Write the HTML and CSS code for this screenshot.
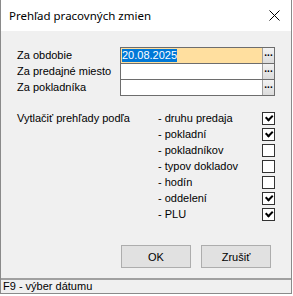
FILE: index.html
```html
<!DOCTYPE html>
<html lang="sk">
<head>
    <meta charset="UTF-8">
    <title>Prehľad pracovných zmien</title>
    <link rel="stylesheet" href="styles.css">
</head>
<body>

<div class="window">
    <div class="titlebar">
        <span class="title">Prehľad pracovných zmien</span>
        <svg class="close" width="11" height="11" viewBox="0 0 11 11">
            <path d="M0.5 0.5 L10.5 10.5 M10.5 0.5 L0.5 10.5" stroke="#000" stroke-width="1"/>
        </svg>
    </div>

    <div class="content">
        <div class="fields">
            <div class="label">Za obdobie</div>
            <div class="input active"><span class="value"><span class="selected">20.08.2025</span></span><span class="dots">...</span></div>
            <div class="label">Za predajné miesto</div>
            <div class="input"><span class="value"></span><span class="dots">...</span></div>
            <div class="label">Za pokladníka</div>
            <div class="input"><span class="value"></span><span class="dots">...</span></div>
        </div>

        <div class="print">
            <div class="print-title">Vytlačiť prehľady podľa</div>
            <div class="options">
                <div class="option"><span>- druhu predaja</span><span class="check on"></span></div>
                <div class="option"><span>- pokladní</span><span class="check on"></span></div>
                <div class="option"><span>- pokladníkov</span><span class="check"></span></div>
                <div class="option"><span>- typov dokladov</span><span class="check"></span></div>
                <div class="option"><span>- hodín</span><span class="check"></span></div>
                <div class="option"><span>- oddelení</span><span class="check on"></span></div>
                <div class="option"><span>- PLU</span><span class="check on"></span></div>
            </div>
        </div>

        <div class="buttons">
            <button class="btn">OK</button>
            <button class="btn">Zrušiť</button>
        </div>
    </div>

    <div class="statusbar">F9 - výber dátumu</div>
</div>

</body>
</html>
```

FILE: styles.css
```css
/* Dialog okno */
body {
    margin: 0;
    background: #ffffff;
    font-family: 'Liberation Sans', Arial, sans-serif;
    font-size: 11px;
    color: #000;
}
.window {
    width: 290px;
    height: 293px;
    border-left: 1px solid #8a8a8a;
    border-right: 1px solid #8a8a8a;
    border-bottom: 1px solid #8a8a8a;
    background: #f0f0f0;
    display: flex;
    flex-direction: column;
}
.titlebar {
    height: 31px;
    background: #ffffff;
    display: flex;
    align-items: center;
    justify-content: space-between;
    padding: 0 10px 0 8px;
    flex-shrink: 0;
}
.title {
    font-family: 'Noto Sans', sans-serif;
    font-size: 11.5px;
    margin-top: -1px;
}
.close {
    margin-right: 1px;
}
.content {
    flex: 1;
    padding: 16px 16px 0 15px;
    display: flex;
    flex-direction: column;
}

/* Polia */
.fields {
    display: grid;
    grid-template-columns: 104px 155px;
    grid-auto-rows: 16px;
}
.label {
    line-height: 16px;
    padding-left: 1px;
}
.input {
    display: flex;
    height: 17px;
    box-sizing: border-box;
    border: 1px solid #6d6d6d;
    background: #ffffff;
}
.input.active .value {
    background: #ffdf9f;
}
.value {
    flex: 1;
    padding-left: 1px;
    line-height: 14px;
}
.selected {
    background: #0078d7;
    color: #ffffff;
    display: inline-block;
    line-height: 13px;
    margin-top: 1px;
}
.dots {
    width: 11px;
    border-left: 1px solid #a0a0a0;
    background: linear-gradient(#f2f2f2, #dcdcdc);
    font-size: 10px;
    font-weight: bold;
    text-align: center;
    line-height: 10px;
}

/* Vytlačiť prehľady */
.print {
    display: flex;
    margin-top: 15px;
}
.print-title {
    width: 141px;
    padding-left: 1px;
    line-height: 16px;
}
.options {
    flex: 1;
    display: flex;
    flex-direction: column;
}
.option {
    height: 16px;
    line-height: 16px;
    display: flex;
    justify-content: space-between;
    align-items: center;
}
.check {
    width: 11px;
    height: 11px;
    border: 1px solid #333;
    background: #fff;
    position: relative;
}
.check.on::after {
    content: "";
    position: absolute;
    left: 2px;
    top: 1px;
    width: 5px;
    height: 3px;
    border-left: 2px solid #000;
    border-bottom: 2px solid #000;
    transform: rotate(-45deg) translate(0, 1px);
}

/* Tlačidlá */
.buttons {
    display: flex;
    justify-content: flex-end;
    gap: 10px;
    margin-top: 23px;
    margin-right: 4px;
}
.btn {
    width: 70px;
    height: 23px;
    border: 1px solid #adadad;
    background: #e1e1e1;
    font-family: 'Liberation Sans', Arial, sans-serif;
    font-size: 11px;
    padding: 0;
}

/* Stavový riadok */
.statusbar {
    height: 13px;
    border-top: 2px solid #a0a0a0;
    padding-left: 2px;
    line-height: 13px;
    background: #f0f0f0;
}
```
